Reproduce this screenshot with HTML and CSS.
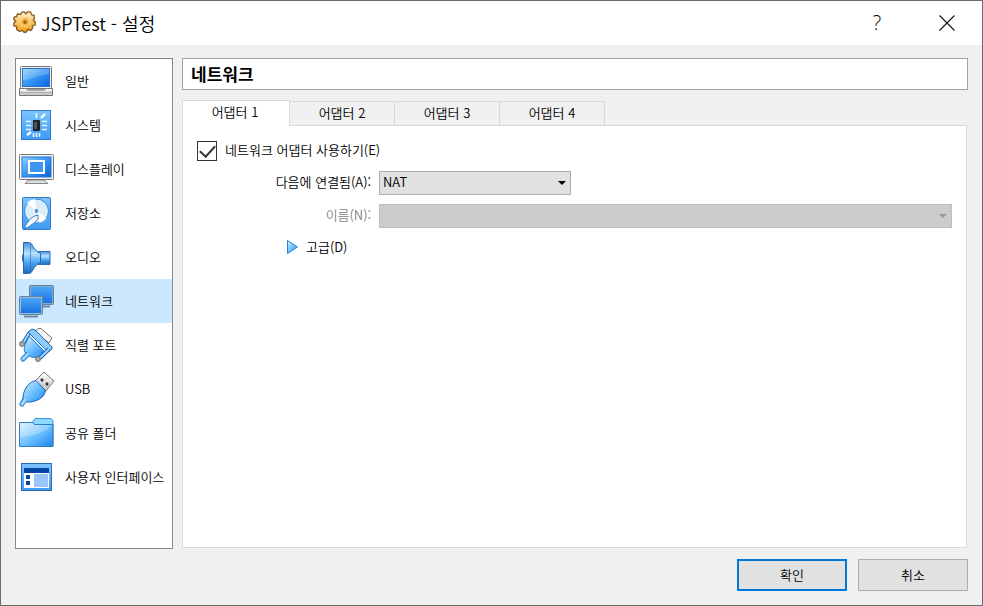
FILE: index.html
```html
<!DOCTYPE html>
<html lang="ko">
<head>
  <meta charset="UTF-8" />
  <meta name="viewport" content="width=device-width, initial-scale=1.0" />
  <title>JSPTest - 설정</title>
  <link rel="stylesheet" href="styles.css">
</head>
<body>
  <!-- Shared gradients for the icons -->
  <svg class="defs" width="0" height="0" aria-hidden="true">
    <defs>
      <linearGradient id="screen" x1="0" y1="0" x2="1" y2="1">
        <stop offset="0" stop-color="#8fd0ff" />
        <stop offset="0.45" stop-color="#3a9bf5" />
        <stop offset="1" stop-color="#0b63e0" />
      </linearGradient>
      <linearGradient id="flat" x1="0" y1="0" x2="0" y2="1">
        <stop offset="0" stop-color="#4aa6f5" />
        <stop offset="1" stop-color="#1673e2" />
      </linearGradient>
      <linearGradient id="metal" x1="0" y1="0" x2="0" y2="1">
        <stop offset="0" stop-color="#ffffff" />
        <stop offset="1" stop-color="#bdbdbd" />
      </linearGradient>
      <linearGradient id="sky" x1="0" y1="0" x2="1" y2="1">
        <stop offset="0" stop-color="#d8f1ff" />
        <stop offset="0.5" stop-color="#6fc2ff" />
        <stop offset="1" stop-color="#1e86ee" />
      </linearGradient>
      <linearGradient id="tile" x1="0" y1="0" x2="0" y2="1">
        <stop offset="0" stop-color="#7cc4ff" />
        <stop offset="1" stop-color="#3d9af5" />
      </linearGradient>
      <linearGradient id="cone" x1="0" y1="0" x2="0" y2="1">
        <stop offset="0" stop-color="#3f8fdd" />
        <stop offset="0.35" stop-color="#b9e2ff" />
        <stop offset="0.65" stop-color="#4ba3f2" />
        <stop offset="1" stop-color="#1d6ac0" />
      </linearGradient>
      <linearGradient id="gold" x1="0" y1="0" x2="0" y2="1">
        <stop offset="0" stop-color="#fff3d6" />
        <stop offset="0.5" stop-color="#f8c468" />
        <stop offset="1" stop-color="#f7a010" />
      </linearGradient>
    </defs>
  </svg>

  <div class="window">
    <header class="titlebar">
      <svg class="app-icon" width="26" height="26" viewBox="-1 0 28 28" aria-hidden="true">
        <path d="M10 2h2l2 2 2-2h3l1 3 3 1v3l-1 2 2 2v3l-3 1v3l-2 2-3-1-2 3h-2l-2-2-3 1-3-2v-3l-3-1v-3l2-2-2-2V8l3-1 1-3 3 1z" fill="url(#gold)" stroke="#8d5a24" stroke-width="1.500" stroke-linejoin="round" />
        <circle cx="13" cy="13" r="5" fill="#f5b548" stroke="#fbdc96" />
        <circle cx="13" cy="13" r="2" fill="#9a6420" />
      </svg>
      <h1 class="title">JSPTest - 설정</h1>
      <button class="title-btn" type="button" aria-label="도움말">?</button>
      <button class="title-btn close" type="button" aria-label="닫기">
        <svg width="16" height="16" viewBox="0 0 16 16"><path d="M.5.5l15 15M15.5.5l-15 15" fill="none" stroke="#111" stroke-width="1.1" /></svg>
      </button>
    </header>

    <div class="main">
      <nav class="sidebar" aria-label="설정 분류">
        <a class="item" href="#general">
          <svg class="icon" width="36" height="36" viewBox="0 0 36 36">
            <rect x="2.500" y="3.500" width="31" height="22" rx="1" fill="#eee" stroke="#777" />
            <rect x="4.500" y="5.500" width="27" height="18" fill="url(#screen)" stroke="#2a72cc" />
            <path d="M5 17V6h26v5C21 11 14 17 5 17z" fill="#fff" opacity=".2" />
            <path d="M1.500 25.500h7l1 1.500h17l1-1.500h7v7h-33z" fill="url(#metal)" stroke="#777" />
            <path d="M10 26h16" stroke="#777" />
            <path d="M2 29.500h32" stroke="#aaa" />
          </svg>
          <span>일반</span>
        </a>
        <a class="item" href="#system">
          <svg class="icon" width="36" height="36" viewBox="0 0 36 36">
            <rect x="3.500" y="3.500" width="29" height="29" fill="url(#tile)" stroke="#3179c8" />
            <rect x="15" y="13" width="7" height="11" rx="1" fill="#222" />
            <path d="M16 15h3v7h-3z" fill="#555" />
            <path d="M8 14.500h5M8 18.500h5M8 22.500h5M24 14.500h5M24 18.500h5M24 22.500h5M18.500 6v5M15.500 26v4M18.500 26v4M21.500 26v4" stroke="#e8f4ff" stroke-width="1.600" />
            <path d="M23 11l4-4M9 28l4-3" stroke="#fff" stroke-width="2.400" />
          </svg>
          <span>시스템</span>
        </a>
        <a class="item" href="#display">
          <svg class="icon" width="36" height="36" viewBox="0 0 36 36">
            <path d="M10 29h16l4 3.500H7z" fill="#ddd" stroke="#888" />
            <rect x="1.500" y="3.500" width="34" height="25" rx="1" fill="#f3f3f3" stroke="#777" />
            <rect x="4" y="6" width="29" height="20" fill="url(#screen)" stroke="#2a72cc" />
            <rect x="11" y="10" width="15" height="12" fill="#3d96f2" stroke="#fff" stroke-width="2" />
          </svg>
          <span>디스플레이</span>
        </a>
        <a class="item" href="#storage">
          <svg class="icon" width="36" height="36" viewBox="0 0 36 36">
            <rect x="4.500" y="2.500" width="28" height="32" rx="1" fill="url(#tile)" stroke="#2f78c4" />
            <circle cx="18.500" cy="16" r="12" fill="#d9edfb" stroke="#3a86cd" />
            <path d="M18.500 16L9 8a12 12 0 0 1 8-4zM18.500 16l10 7a12 12 0 0 1-7 5z" fill="#fff" />
            <circle cx="18.500" cy="16" r="2.500" fill="#4a95d8" stroke="#fff" />
            <path d="M20 20c1 4-3 8-7 10-2 2-4 3-6 3 0-2 1-4 3-6 2-4 6-6 10-7z" fill="#f4faff" stroke="#3a7fc4" />
          </svg>
          <span>저장소</span>
        </a>
        <a class="item" href="#audio">
          <svg class="icon" width="36" height="36" viewBox="0 0 36 36">
            <rect x="4" y="15" width="4" height="8" rx="2" fill="#2b6db5" />
            <path d="M20 12.500h12v13H20z" fill="url(#cone)" stroke="#2f6eb4" />
            <path d="M5.500 3.500h5c2 0 3 1 4 3 2 4 4 6 8 8v9c-4 2-6 4-8 8-1 2-2 3-4 3h-5z" fill="url(#cone)" stroke="#2867ad" />
            <path d="M12.500 4v30" stroke="#2867ad" opacity=".6" />
          </svg>
          <span>오디오</span>
        </a>
        <a class="item selected" href="#network" aria-current="page">
          <svg class="icon" width="36" height="36" viewBox="0 0 36 36">
            <path d="M14 23.500h18" stroke="#6e879e" stroke-width="2" />
            <rect x="11.500" y="2.500" width="24" height="19" rx="1" fill="#87a9c8" stroke="#5f82a3" />
            <rect x="13" y="4" width="21" height="16" fill="url(#flat)" />
            <path d="M6 33.500h14" stroke="#74899c" stroke-width="2" />
            <rect x="1.500" y="13.500" width="23" height="18" rx="1" fill="#9dbbd5" stroke="#5f82a3" />
            <rect x="3" y="15" width="20" height="15" fill="url(#flat)" />
          </svg>
          <span>네트워크</span>
        </a>
        <a class="item" href="#serial">
          <svg class="icon" width="36" height="36" viewBox="0 0 36 36">
            <path d="M20 1.500h3L34 11l-3 5L17 5z" fill="#f3f3f3" stroke="#777" />
            <path d="M12 5l-7 11" stroke="#2468af" stroke-width="4" />
            <path d="M12 5l-7 11" stroke="#9bd3ff" stroke-width="2" />
            <path d="M10 5l4-3 3 1 17 17v2l-4 3z" fill="#8accff" stroke="#2468af" stroke-linejoin="round" />
            <path d="M11 9l15 15-3 4c-4 3-8 3-12 1-4-2-6-6-4-11z" fill="url(#sky)" stroke="#1f75cc" stroke-linejoin="round" />
            <path d="M31 22l-9 9" stroke="#2468af" stroke-width="4" />
            <path d="M31 22l-9 9" stroke="#9bd3ff" stroke-width="2" />
            <path d="M9 28l-4 4" stroke="#1f75cc" stroke-width="5" stroke-linecap="round" />
            <path d="M10 27l-5 5" stroke="#9bd8ff" stroke-width="3" stroke-linecap="round" />
            <circle cx="4" cy="17" r="2.500" fill="#aaa" stroke="#777" />
            <circle cx="20" cy="32" r="2.500" fill="#aaa" stroke="#777" />
          </svg>
          <span>직렬 포트</span>
        </a>
        <a class="item" href="#usb">
          <svg class="icon" width="36" height="36" viewBox="0 0 36 36">
            <path d="M17 10l9-9 10 9-9 11z" fill="url(#metal)" stroke="#777" stroke-linejoin="round" />
            <path d="M23 8l2 2M28 12l2 2" stroke="#333" stroke-width="2.500" />
            <path d="M7 28l-3 5" stroke="#1f75cc" stroke-width="5" stroke-linecap="round" />
            <path d="M18 9.500l9 9.500c1 5-5 11-15 12H7l-2-3c0-9 5-17 13-18.500z" fill="url(#sky)" stroke="#1d62b0" stroke-linejoin="round" />
            <path d="M7 29l-3 4" stroke="#9bd8ff" stroke-width="3" stroke-linecap="round" />
          </svg>
          <span>USB</span>
        </a>
        <a class="item" href="#shared">
          <svg class="icon" width="36" height="36" viewBox="0 0 36 36">
            <path d="M14 8l3-4.500h16l2 2V31H14z" fill="#8fd8ff" stroke="#3b8fd4" />
            <path d="M1.500 7.500h13l2 2h18.500v22H1.500z" fill="url(#sky)" stroke="#2b7cc8" />
            <path d="M2 22V8h12l2 2h18c-6 7-17 11-32 12z" fill="#fff" opacity=".25" />
          </svg>
          <span>공유 폴더</span>
        </a>
        <a class="item" href="#ui">
          <svg class="icon" width="36" height="36" viewBox="0 0 36 36">
            <rect x="3.500" y="4.500" width="30" height="27" fill="url(#tile)" stroke="#2b6cb5" />
            <rect x="6" y="9" width="25" height="20" fill="#fff" />
            <rect x="6" y="9" width="25" height="5" fill="#0846a5" />
            <rect x="16" y="15" width="14" height="13" fill="#9ac5ff" />
            <path d="M8 16h4v4H8zM8 22h4v4H8z" fill="#0846a5" />
          </svg>
          <span>사용자 인터페이스</span>
        </a>
      </nav>

      <main class="content">
        <h2 class="page-title">네트워크</h2>

        <div class="tabs" role="tablist">
          <button class="tab active" type="button" role="tab" aria-selected="true">어댑터 1</button>
          <button class="tab" type="button" role="tab" aria-selected="false">어댑터 2</button>
          <button class="tab" type="button" role="tab" aria-selected="false">어댑터 3</button>
          <button class="tab" type="button" role="tab" aria-selected="false">어댑터 4</button>
        </div>

        <div class="panel" role="tabpanel">
          <div class="check-row">
            <input class="check" type="checkbox" id="enable" checked />
            <label for="enable">네트워크 어댑터 사용하기(E)</label>
          </div>

          <div class="fields">
            <label for="attached">다음에 연결됨(A):</label>
            <div class="select short">
              <select id="attached">
                <option>NAT</option>
              </select>
            </div>

            <label class="muted" for="name">이름(N):</label>
            <div class="select disabled">
              <select id="name" disabled>
                <option></option>
              </select>
            </div>
          </div>

          <button class="advanced" type="button" aria-expanded="false">
            <svg width="13" height="16" viewBox="0 0 13 16"><path d="M1.500 1.500v13l10-6.500z" fill="url(#sky)" stroke="#2c7fd0" /></svg>
            고급(D)
          </button>
        </div>
      </main>
    </div>

    <footer class="actions">
      <button class="btn primary" type="button">확인</button>
      <button class="btn" type="button">취소</button>
    </footer>
  </div>
</body>
</html>
```
FILE: styles.css
```css
* {
  box-sizing: border-box;
}

body {
  margin: 0;
  font-family: "Noto Sans CJK KR", sans-serif;
  font-size: 13px;
  font-weight: 350;
  line-height: 20px;
  color: #000;
}

button,
select {
  font: inherit;
  color: inherit;
}

.defs {
  position: absolute;
}

.window {
  display: flex;
  flex-direction: column;
  min-height: 100vh;
  background-color: #f0f0f0;
  border: 1px solid #6b6b6b;
}

/* Title bar */
.titlebar {
  display: flex;
  align-items: center;
  height: 44px;
  padding: 0 12px 0 11px;
  background-color: #fff;
}

.title {
  flex: 1;
  margin: 0 0 0 3px;
  font-size: 18px;
  line-height: 24px;
  font-weight: 350;
}

.title-btn {
  display: flex;
  align-items: center;
  justify-content: center;
  width: 46px;
  height: 32px;
  margin-left: 24px;
  padding: 0;
  border: none;
  background: none;
  font-family: "Open Sans", sans-serif;
  font-size: 20px;
  font-weight: 300;
}

/* Sidebar and page */
.main {
  display: flex;
  flex: 1;
  gap: 9px;
  padding: 13px 14px 0;
}

.sidebar {
  width: 158px;
  border: 1px solid #828790;
  background-color: #fff;
}

.item {
  display: flex;
  align-items: center;
  gap: 11px;
  height: 44px;
  padding-left: 2px;
  color: #000;
  text-decoration: none;
  white-space: nowrap;
}

.item.selected {
  background-color: #cce8ff;
}

.icon {
  flex: none;
}

.content {
  display: flex;
  flex-direction: column;
  flex: 1;
  min-width: 0;
}

.page-title {
  margin: 0 0 10px;
  padding: 3px 8px;
  border: 1px solid #a0a0a0;
  background-color: #fff;
  font-size: 17px;
  line-height: 24px;
  font-weight: bold;
}

/* Tabs */
.tabs {
  display: flex;
  align-items: flex-end;
}

.tab {
  width: 105px;
  height: 24px;
  padding: 0 0 1px;
  border: 1px solid #d9d9d9;
  border-left: none;
  border-bottom: none;
  background-color: #f0f0f0;
}

.tab.active {
  z-index: 1;
  width: 108px;
  height: 26px;
  padding: 0 2px 4px 0;
  margin-bottom: -1px;
  border-left: 1px solid #d9d9d9;
  background-color: #fff;
}

.panel {
  flex: 1;
  margin: 0 1px 1px 0;
  padding: 15px 14px;
  border: 1px solid #d9d9d9;
  background-color: #fff;
}

/* Adapter form */
.check-row {
  display: flex;
  align-items: center;
  gap: 8px;
  margin-bottom: 10px;
}

.check-row label {
  padding-bottom: 2px;
  line-height: 18px;
}

.check {
  appearance: none;
  display: flex;
  justify-content: center;
  width: 20px;
  height: 20px;
  margin: 0;
  border: 1px solid #333;
  background-color: #fff;
}

.check:checked::after {
  content: "";
  width: 7px;
  height: 13px;
  border: solid #333;
  border-width: 0 2px 2px 0;
  transform: rotate(42deg);
}

.fields {
  display: grid;
  grid-template-columns: 174px 1fr;
  column-gap: 8px;
  row-gap: 9px;
  align-items: center;
}

.fields label {
  padding-bottom: 2px;
  text-align: right;
}

.muted {
  color: #838383;
}

.select {
  position: relative;
}

.select.short {
  width: 192px;
}

.select select {
  appearance: none;
  display: block;
  width: 100%;
  height: 24px;
  padding: 0 20px 2px 3px;
  border: 1px solid #adadad;
  border-radius: 0;
  background-color: #e1e1e1;
}

.select::after {
  content: "";
  position: absolute;
  top: 10px;
  right: 5px;
  border: 4px solid transparent;
  border-top-color: #000;
  border-bottom: none;
  pointer-events: none;
}

.select.disabled select {
  border-color: #bfbfbf;
  background-color: #ccc;
  opacity: 1;
}

.select.disabled::after {
  border-top-color: #999;
}

.advanced {
  display: flex;
  align-items: center;
  gap: 7px;
  margin: 9px 0 0 89px;
  padding: 0;
  border: none;
  background: none;
}

/* Bottom buttons */
.actions {
  display: flex;
  justify-content: flex-end;
  gap: 11px;
  padding: 10px 14px 14px;
}

.btn {
  width: 110px;
  height: 32px;
  padding-bottom: 2px;
  border: 1px solid #adadad;
  background-color: #e1e1e1;
}

.btn.primary {
  border: 2px solid #0078d7;
}
```
